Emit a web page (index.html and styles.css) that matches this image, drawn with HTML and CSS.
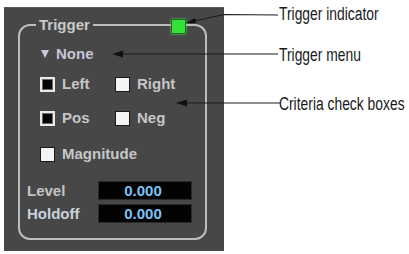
FILE: index.html
```html
<!DOCTYPE html>
<html>
<head>
<meta charset="utf-8">
<link rel="stylesheet" href="styles.css">
</head>
<body>
<div class="page">
  <div class="panel">
    <fieldset class="trigger">
      <legend>Trigger</legend>
      <span class="indicator"></span>
      <div class="upper">
        <div class="menu"><span class="tri"></span>None</div>
        <div class="checks">
          <label class="check"><span class="box on"></span>Left</label>
          <label class="check"><span class="box"></span>Right</label>
          <label class="check"><span class="box on"></span>Pos</label>
          <label class="check"><span class="box"></span>Neg</label>
          <label class="check"><span class="box"></span>Magnitude</label>
        </div>
      </div>
      <div class="fields">
        <div class="field"><span class="flabel">Level</span><span class="value">0.000</span></div>
        <div class="field"><span class="flabel hold">Holdoff</span><span class="value">0.000</span></div>
      </div>
    </fieldset>
  </div>
  <div class="notes">
    <div class="note n1"><span>Trigger indicator</span></div>
    <div class="note n2"><span>Trigger menu</span></div>
    <div class="note n3"><span>Criteria check boxes</span></div>
  </div>
  <svg class="arrows" width="409" height="254" viewBox="0 0 409 254">
    <g stroke="#1c1c1c" stroke-width="1.2" fill="none">
      <polyline points="192,21.5 224,14.5 278,15"/>
      <line x1="120" y1="54" x2="278" y2="54"/>
      <line x1="184" y1="103" x2="280" y2="103"/>
    </g>
    <g fill="#111">
      <polygon points="186,23 195,18 196,23"/>
      <polygon points="112,54 123,50.5 123,57.5"/>
      <polygon points="176,103 187,99.5 187,106.5"/>
    </g>
  </svg>
</div>
</body>
</html>
```

FILE: styles.css
```css
html, body {
  margin: 0;
  padding: 0;
  background: #ffffff;
}
.page {
  position: relative;
  width: 409px;
  height: 254px;
  display: flex;
  overflow: hidden;
}
.panel {
  flex: none;
  margin: 7px 0 0 4px;
  width: 220px;
  height: 244px;
  background: #474747;
  box-sizing: border-box;
  padding: 8px 0 0 14px;
  border-top: 1px solid #5a5a5a;
}
.trigger {
  position: relative;
  margin: 0;
  padding: 0 0 0 7px;
  width: 189px;
  height: 224px;
  box-sizing: border-box;
  border: 2px solid #bdbdbd;
  border-radius: 12px;
  font-family: "Liberation Sans", Arial, sans-serif;
  font-weight: bold;
  font-size: 15px;
  color: #c6c6c6;
}
.trigger legend {
  margin-left: 9px;
  padding: 0 3px;
  line-height: 18px;
  color: #cacaca;
}
.indicator {
  position: absolute;
  left: 151px;
  top: -15px;
  width: 13px;
  height: 13px;
  background: #35e03a;
  border: 1px solid #1f6e22;
  box-shadow: 0 0 2px #5af05e;
}
.upper {
  padding-left: 13px;
}
.menu {
  display: flex;
  align-items: center;
  margin-top: 11px;
  line-height: 18px;
  color: #c8c6d6;
}
.tri {
  width: 0;
  height: 0;
  border-left: 4.5px solid transparent;
  border-right: 4.5px solid transparent;
  border-top: 8px solid #c8c6d6;
  margin: 0 7px 0 1px;
}
.checks {
  display: grid;
  grid-template-columns: 75px auto;
  row-gap: 16px;
  margin-top: 12px;
}
.check {
  display: flex;
  align-items: center;
  line-height: 18px;
}
.check:last-child {
  grid-column: 1 / 3;
  margin-top: 2px;
}
.box {
  width: 15px;
  height: 15px;
  box-sizing: border-box;
  background: #f4f4f4;
  border: 1px solid #1a1a1a;
  margin-right: 7px;
  flex: none;
}
.box.on {
  background: #050505;
  border: 2px solid #eaeaea;
  box-shadow: inset 0 0 0 1px #6a6a6a;
}
.fields {
  display: flex;
  flex-direction: column;
  gap: 4px;
  margin-top: 18px;
}
.field {
  display: flex;
  align-items: center;
  height: 19px;
}
.flabel {
  width: 71px;
  color: #c4c4c4;
}
.flabel.hold {
  color: #c9d2de;
}
.value {
  width: 94px;
  height: 19px;
  box-sizing: border-box;
  background: #030303;
  border: 1px solid #2a2a2a;
  color: #7cc2f2;
  text-align: center;
  line-height: 17px;
  padding-right: 4px;
}
.notes {
  flex: none;
  display: flex;
  flex-direction: column;
  margin-left: 55px;
  font-family: "Liberation Sans", Arial, sans-serif;
  font-size: 18px;
  color: #1a1a1a;
}
.note {
  line-height: 20px;
  white-space: nowrap;
}
.note span {
  display: inline-block;
  transform: scaleX(0.77);
  transform-origin: left center;
}
.n1 { margin-top: 4px; }
.n2 { margin-top: 21px; }
.n3 { margin-top: 29px; }
.arrows {
  position: absolute;
  left: 0;
  top: 0;
}
```
